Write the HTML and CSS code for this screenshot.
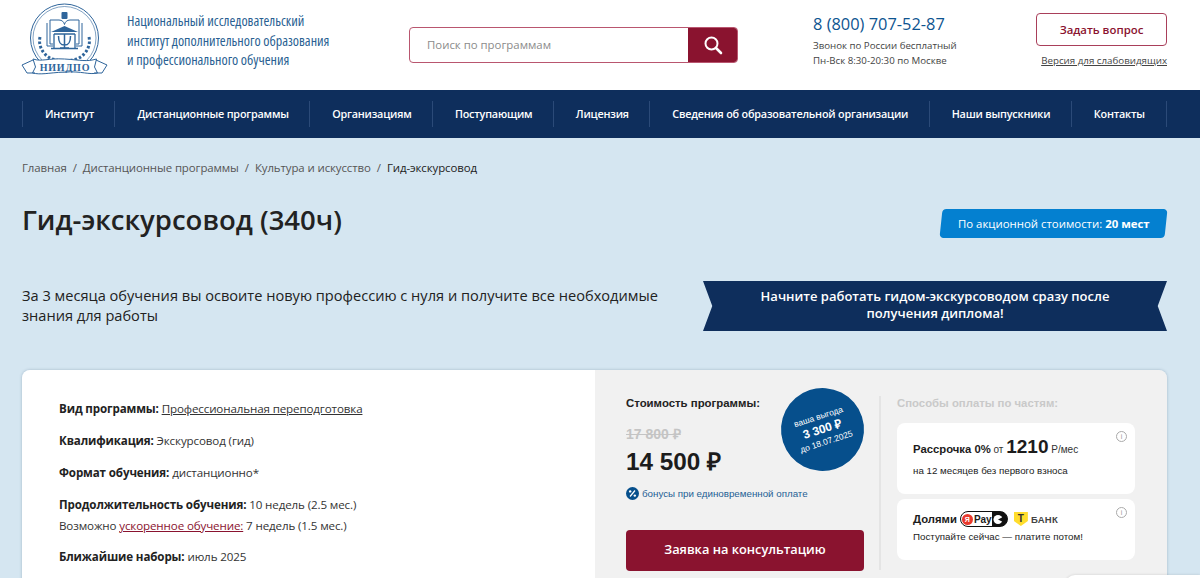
FILE: index.html
```html
<!DOCTYPE html>
<html lang="ru">
<head>
<meta charset="utf-8">
<title>Гид-экскурсовод</title>
<link rel="stylesheet" href="styles.css">
</head>
<body>
<header class="header">
  <div class="brand">
    <svg class="logo" viewBox="0 0 88 74" width="88" height="74" fill="none" stroke="#2f659b">
      <circle cx="43.5" cy="35" r="34" stroke-width="1"/>
      <circle cx="43.5" cy="35" r="31.5" stroke-width=".6"/>
      <path d="M29 17h9c3 0 5 2 5.500 4.500C44 19 46 17 49 17h9v24h-3M29 17v24h3M26 20v23h6M61 20v23h-6" stroke-width="1"/>
      <path d="M30 29h27l-13.500-6z" fill="#2f659b" stroke="none"/>
      <path d="M33 31h21M33 31v14M54 31v14M30 45.500h27" stroke-width="1.300"/>
      <path d="M37.500 33c0 7 2 9 6 9s6-2 6-9M43.500 31v14M39 45h9" stroke-width="1.500"/>
      <rect x="40.500" y="9" width="6" height="7" rx="1" fill="#2f659b" stroke="none"/>
      <path d="M19 34c-2 9 3 18 12 22l7 1.500M68 34c2 9-3 18-12 22l-7 1.500" stroke-width="3" stroke-dasharray="2.500 2"/>
      <path d="M12 56c9 3 15-1 31.500 0s22 3 32 0l-2 8 3 6c-9 2-15-2-33-1s-23 3-32 1l3-6z" fill="#fff" stroke-width="1"/>
      <path d="M12 57l-11 5 5 8h8M75 57l11 5-5 8h-8" stroke-width="1"/>
      <text x="44" y="68" class="logo-text">НИИДПО</text>
    </svg>
    <p class="brand-name">Национальный исследовательский<br>институт дополнительного образования<br>и профессионального обучения</p>
  </div>
  <form class="search">
    <span class="search-field">Поиск по программам</span>
    <span class="search-btn">
      <svg width="20" height="20" viewBox="0 0 20 20" fill="none" stroke="#fff"><circle cx="8.500" cy="8.500" r="6" stroke-width="2"/><path d="M13 13l5 5" stroke-width="2.600" stroke-linecap="round"/></svg>
    </span>
  </form>
  <div class="contact">
    <div class="phone">8 (800) 707-52-87</div>
    <p class="contact-note">Звонок по России бесплатный<br>Пн-Вск 8:30-20:30 по Москве</p>
  </div>
  <div class="actions">
    <a class="ask">Задать вопрос</a>
    <a class="vision">Версия для слабовидящих</a>
  </div>
</header>

<nav class="nav">
  <a>Институт</a>
  <a>Дистанционные программы</a>
  <a>Организациям</a>
  <a>Поступающим</a>
  <a>Лицензия</a>
  <a>Сведения об образовательной организации</a>
  <a>Наши выпускники</a>
  <a>Контакты</a>
</nav>

<main class="main">
  <div class="crumbs">
    <span>Главная</span><i>/</i><span>Дистанционные программы</span><i>/</i><span>Культура и искусство</span><i>/</i><b>Гид-экскурсовод</b>
  </div>
  <div class="title-row">
    <h1>Гид-экскурсовод (340ч)</h1>
    <div class="seats">По акционной стоимости: <b>20 мест</b></div>
  </div>
  <div class="intro-row">
    <p class="intro">За 3 месяца обучения вы освоите новую профессию с нуля и получите все необходимые знания для работы</p>
    <div class="ribbon">Начните работать гидом-экскурсоводом сразу после получения диплома!</div>
  </div>

  <section class="card">
    <div class="facts">
      <p><b>Вид программы:</b> <u>Профессиональная переподготовка</u></p>
      <p><b>Квалификация:</b> Экскурсовод (гид)</p>
      <p><b>Формат обучения:</b> дистанционно*</p>
      <p class="joined"><b>Продолжительность обучения:</b> 10 недель (2.5 мес.)</p>
      <p>Возможно <u class="accent">ускоренное обучение:</u> 7 недель (1.5 мес.)</p>
      <p><b>Ближайшие наборы:</b> июль 2025</p>
    </div>
    <div class="pay">
      <div class="price">
        <div class="price-label">Стоимость программы:</div>
        <div class="price-old">17 800 ₽</div>
        <div class="price-new">14 500 ₽</div>
        <div class="bonus">
          <svg width="13" height="13" viewBox="0 0 13 13"><circle cx="6.500" cy="6.500" r="6.500" fill="#064f8c"/><path d="M4 9.500l5-6" stroke="#fff" stroke-width="1.200"/><circle cx="4.200" cy="4.400" r="1.200" fill="#fff"/><circle cx="8.800" cy="8.600" r="1.200" fill="#fff"/></svg>
          <span>бонусы при единовременной оплате</span>
        </div>
        <a class="order">Заявка на консультацию</a>
        <div class="badge">
          <span>ваша выгода</span>
          <b>3 300 ₽</b>
          <span>до 18.07.2025</span>
        </div>
      </div>
      <div class="parts">
        <div class="parts-title">Способы оплаты по частям:</div>
        <div class="plan plan-a">
          <i class="info">i</i>
          <div class="plan-line"><b>Рассрочка 0%</b> <small>от</small> <strong>1210</strong> <small>Р/мес</small></div>
          <div class="plan-sub">на 12 месяцев без первого взноса</div>
        </div>
        <div class="plan plan-b">
          <i class="info">i</i>
          <div class="plan-brands">
            <b>Долями</b>
            <span class="ypay"><em>Я</em><span>Pay</span><svg width="17" height="13" viewBox="0 0 17 13"><circle cx="9" cy="6.500" r="4.500" fill="#fff"/><path d="M9 6.500l6-3v6z" fill="#111"/></svg></span>
            <span class="tbank"><span class="shield">Т</span>БАНК</span>
          </div>
          <div class="plan-note">Поступайте сейчас — платите потом!</div>
        </div>
      </div>
    </div>
  </section>
</main>
<div class="widget"></div>
</body>
</html>
```
FILE: styles.css
```css
* { box-sizing: border-box; }
html, body { height: 578px; overflow: hidden; }
body { margin: 0; background: #d5e6f1; color: #222; font-family: "Open Sans", "Liberation Sans", sans-serif; position: relative; }
p, h1 { margin: 0; }

.header { height: 90px; background: #fff; padding: 0 33px 0 22px; display: flex; align-items: flex-start; }
.brand { width: 387px; display: flex; align-items: flex-start; padding-top: 3px; margin-left: -1px; margin-right: 1px; }
.logo { flex: none; margin-right: 18px; }
.logo-text { font: bold 10px "Liberation Serif", serif; fill: #2f659b; stroke: none; text-anchor: middle; letter-spacing: .8px; }
.brand-name { font-family: "Open Sans", sans-serif; font-stretch: 75%; font-size: 14.1px; line-height: 19.5px; color: #2a5f92; padding-top: 8px; white-space: nowrap; }

.search { width: 329px; height: 36px; margin-top: 27px; display: flex; border: 1px solid #b9566f; border-radius: 4px; overflow: hidden; }
.search-field { flex: 1; padding-left: 17px; font-size: 11.4px; line-height: 34px; color: #8b8b8b; }
.search-btn { width: 49px; background: #8a132f; display: flex; align-items: center; justify-content: center; }

.contact { width: 223px; margin-left: 75px; padding-top: 12px; }
.phone { font-size: 16.4px; line-height: 24px; font-weight: 500; color: #0d5490; }
.contact-note { margin-top: 2px; font-size: 9.7px; line-height: 15px; color: #444; white-space: nowrap; }

.actions { width: 131px; padding-top: 13px; text-align: center; }
.ask { display: block; height: 33px; border: 1px solid #a93f5a; border-radius: 4px; font-size: 11.4px; font-weight: 600; line-height: 31px; color: #8a132f; }
.vision { display: block; margin-top: 7px; font-size: 9.75px; line-height: 15px; color: #444; text-decoration: underline; white-space: nowrap; text-align: right; }

.nav { height: 48px; background: #0e2e5c; padding: 11px 33px 11px 22px; display: flex; justify-content: space-between; }
.nav a { border-left: 1px solid #2b4a78; font-size: 10.8px; letter-spacing: -.2px; font-weight: 600; line-height: 26px; color: #fff; padding: 0 20px 0 22px; white-space: nowrap; }
.nav a:last-child { border-right: 1px solid #2b4a78; padding-right: 21px; }

.main { padding: 0 33px 0 22px; }
.crumbs { padding-top: 21px; font-size: 11.45px; letter-spacing: -.1px; line-height: 17px; color: #555; display: flex; gap: 6px; }
.crumbs i { font-style: normal; }
.crumbs b { font-weight: 400; color: #222; }

.title-row { display: flex; justify-content: space-between; align-items: flex-start; margin-top: 22px; height: 44px; }
h1 { font-size: 27.5px; line-height: 44px; font-weight: 600; color: #222; }
.seats { position: relative; z-index: 0; width: 227px; height: 29px; margin-top: 11px; font-size: 11.4px; line-height: 29px; color: #fff; padding-left: 18px; }
.seats::before { content: ""; position: absolute; z-index: -1; inset: 0 1px; background: #0480d0; border-radius: 4px; transform: skewX(-6deg); }
.seats b { font-weight: 700; }

.intro-row { display: flex; justify-content: space-between; align-items: center; margin-top: 39px; height: 50px; }
.intro { width: 660px; margin-top: -2px; font-size: 14.6px; line-height: 20px; color: #222; }
.ribbon { width: 464px; height: 50px; padding: 7px 50px 0; background: #0e2e5c; color: #fff; text-align: center; font-size: 13px; line-height: 17px; font-weight: 600; clip-path: polygon(0 0, 100% 0, 98% 50%, 100% 100%, 0 100%, 2% 50%); }

.card { display: flex; margin-top: 39px; height: 300px; border-radius: 8px 8px 0 0; overflow: hidden; box-shadow: 0 0 3px rgba(60, 90, 120, .35); }
.facts { width: 573px; background: #fff; padding: 30px 0 0 37px; font-size: 11.6px; letter-spacing: -.13px; line-height: 17px; color: #333; }
.facts p { margin-bottom: 15px; }
.facts p.joined { margin-bottom: 4px; }
.facts p:nth-child(5) { margin-bottom: 14px; }
.facts b { font-weight: 700; color: #222; }
.accent { color: #8a132f; }

.pay { flex: 1; background: #f1f1f1; display: flex; font-family: "Liberation Sans", Arial, sans-serif; padding-top: 26px; }
.price { position: relative; width: 284px; padding-left: 31px; }
.price-label { font-size: 11.4px; line-height: 14px; font-weight: 700; color: #222; }
.price-old { margin-top: 16px; font-size: 14px; line-height: 16px; font-weight: 700; color: #c4c4c4; text-decoration: line-through; }
.price-new { margin-top: 4px; font-size: 24.3px; line-height: 32px; font-weight: 700; color: #1c1c1c; }
.bonus { display: flex; align-items: center; gap: 3px; margin-top: 9px; font-size: 9.75px; line-height: 13px; color: #1e5f94; }
.order { display: block; width: 238px; height: 41px; margin-top: 30px; background: #8a132f; border-radius: 4px; text-align: center; font: 600 12.8px/39px "Open Sans", sans-serif; color: #fff; }
.badge { position: absolute; left: 186px; top: -8px; width: 83px; height: 83px; border-radius: 50%; background: #064f8c; color: #fff; display: flex; flex-direction: column; align-items: center; justify-content: center; transform: rotate(-18deg); font-size: 8.5px; line-height: 11px; }
.badge b { font-size: 12px; line-height: 15px; }

.parts { width: 256px; margin-top: 0; border-left: 2px solid #e4e4e4; padding-left: 16px; height: 174px; }
.parts-title { font-size: 11.35px; line-height: 14px; font-weight: 700; color: #c9c9c9; }
.plan { position: relative; width: 238px; background: #fff; border-radius: 8px; padding-left: 16px; }
.plan-a { height: 71px; margin-top: 13px; padding-top: 13px; }
.plan-b { height: 61px; margin-top: 5px; padding-top: 12px; }
.info { position: absolute; right: 8px; top: 8px; width: 11px; height: 11px; border: 1px solid #aaa; border-radius: 50%; font: 7px/9px "Liberation Sans", sans-serif; text-align: center; color: #999; }
.plan-line { font-size: 10px; line-height: 22px; color: #333; white-space: nowrap; }
.plan-line b { font-size: 11.3px; color: #1c1c1c; }
.plan-line small { font-size: 10px; }
.plan-line strong { font-size: 19px; color: #1c1c1c; }
.plan-sub { font-size: 9.75px; line-height: 15px; color: #222; margin-top: 2px; }
.plan-brands { display: flex; align-items: center; height: 16px; font-size: 11.3px; color: #1c1c1c; }
.ypay { display: inline-flex; align-items: center; width: 48px; height: 16px; margin-left: 3px; border: 1px solid #111; border-radius: 8px; background: linear-gradient(90deg, #fff 68%, #111 68%); font-size: 10px; font-weight: 700; overflow: hidden; }
.ypay em { flex: none; width: 11px; height: 11px; margin: 0 1px; border-radius: 50%; background: #e9392c; color: #fff; font: 700 7px/11px "Liberation Sans", sans-serif; text-align: center; }
.ypay svg { flex: none; margin-left: -3px; }
.tbank { display: inline-flex; align-items: center; margin-left: 6px; gap: 3px; font-size: 9.5px; font-weight: 700; letter-spacing: .3px; color: #444; }
.shield { width: 14px; height: 14px; background: #ffdd2d; color: #333; text-align: center; font-size: 10px; line-height: 13px; clip-path: polygon(0 0, 100% 0, 100% 65%, 50% 100%, 0 65%); }
.plan-note { margin-top: 2px; font-size: 9.75px; line-height: 15px; color: #222; white-space: nowrap; }

.widget { position: absolute; left: 1065px; top: 575px; width: 135px; height: 20px; background: #fff; border-radius: 10px 0 0 0; box-shadow: 0 0 3px rgba(0, 0, 0, .15); }
```
